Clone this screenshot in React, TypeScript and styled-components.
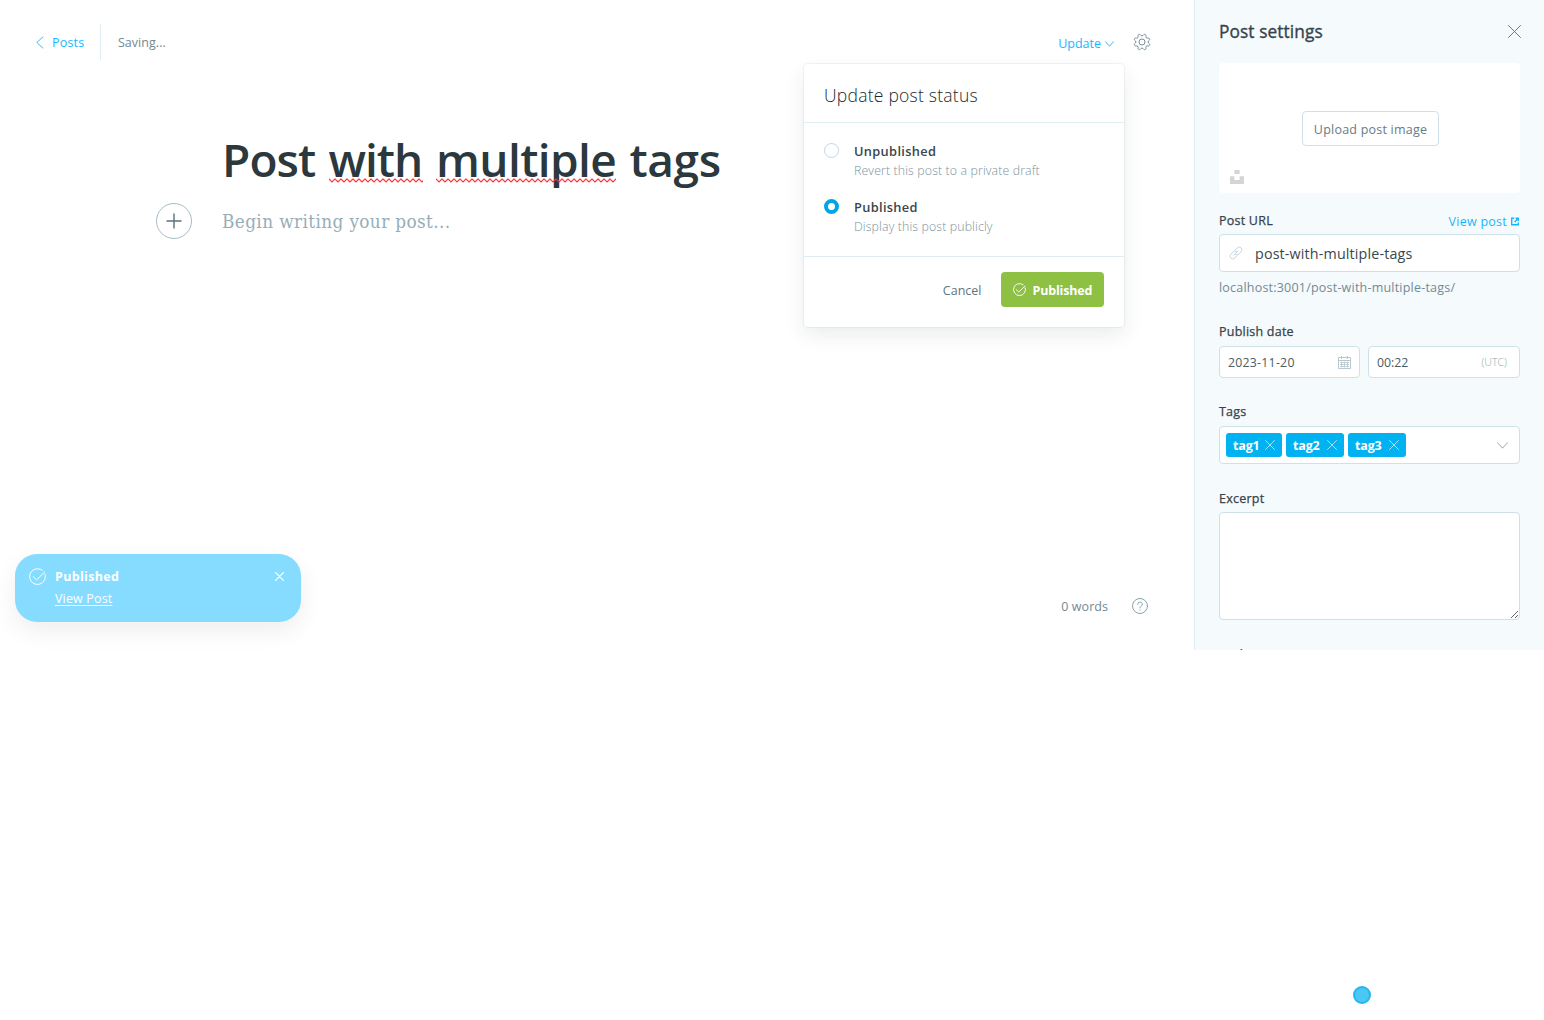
import React from "react";
import styled, { createGlobalStyle, css } from "styled-components";

const GlobalStyle = createGlobalStyle`
  *, *::before, *::after { box-sizing: border-box; }
  html, body { margin: 0; padding: 0; background: #fff; }
  body {
    font-family: "Open Sans", "Noto Sans", sans-serif;
    font-size: 12.5px;
    color: #394047;
  }
  button, input, textarea { font-family: inherit; margin: 0; }
`;

const ink = "#3a464c";
const slate = "#738a94";
const blue = "#14b8ff";
const line = "#dfeef3";
const field = "#cfe0e8";

const Page = styled.div`
  display: flex;
  flex-direction: column;
  width: 1544px;
  height: 1020px;
  overflow: hidden;
`;

const Screen = styled.div`
  position: relative;
  display: flex;
  height: 650px;
  overflow: hidden;
`;

const Label = styled.span<{ $ls?: number }>`
  letter-spacing: ${(p) => p.$ls ?? 0}px;
  white-space: nowrap;
`;

/* Editor */
const Editor = styled.main`
  position: relative;
  display: flex;
  flex-direction: column;
  width: 1194px;
`;

const TopBar = styled.header`
  display: flex;
  justify-content: space-between;
  height: 60px;
  padding: 24px 44px 0 36px;
`;

const BarGroup = styled.div`
  display: flex;
  align-items: center;
  height: 36px;
`;

const BackLink = styled.a`
  display: flex;
  align-items: center;
  gap: 8px;
  height: 36px;
  padding-right: 16px;
  border-right: 1px solid ${line};
  color: ${blue};
`;

const SaveState = styled.span`
  padding-left: 16.5px;
  color: ${slate};
`;

const UpdateTrigger = styled.button`
  display: flex;
  align-items: center;
  gap: 4px;
  padding: 3px 0 0;
  border: 0;
  background: none;
  color: ${blue};
  font-size: 12.5px;
  line-height: 18px;
`;

const IconButton = styled.button`
  display: flex;
  padding: 0;
  border: 0;
  background: none;
  color: ${slate};
`;

const GearButton = styled(IconButton)`
  margin-left: 20px;
`;

const CloseButton = styled(IconButton)`
  margin-right: -0.5px;
`;

const Writing = styled.div`
  flex: 1;
  padding: 66px 0 0 156px;
`;

const Title = styled.h1`
  display: flex;
  gap: 13.5px;
  margin: 0;
  padding-left: 66px;
  height: 66px;
  color: #2b383d;
  font-size: 46px;
  font-weight: 600;
  line-height: 66px;
`;

const Word = styled.span<{ $w: number; $ls: number }>`
  position: relative;
  width: ${(p) => p.$w}px;
  letter-spacing: ${(p) => p.$ls}px;
  white-space: nowrap;
`;

const Squiggle = styled.svg`
  position: absolute;
  left: 0;
  top: 52px;
  width: 100%;
  height: 5px;
`;

const BodyRow = styled.div`
  display: flex;
  align-items: center;
  gap: 30px;
  height: 36px;
  margin-top: 11px;
`;

const PlusButton = styled.button`
  display: flex;
  align-items: center;
  justify-content: center;
  width: 36px;
  height: 36px;
  padding: 0;
  border: 1px solid #a5bcc4;
  border-radius: 50%;
  background: #fff;
  color: #5a7079;
`;

const Placeholder = styled.p`
  margin: 0;
  padding-top: 2px;
  color: #97aeb8;
  font-family: "DejaVu Serif Condensed", "DejaVu Serif", serif;
  font-stretch: condensed;
  font-size: 18.8px;
  line-height: 30px;
`;

const Footer = styled.footer`
  display: flex;
  justify-content: flex-end;
  align-items: center;
  gap: 24px;
  height: 36px;
  margin-bottom: 26px;
  padding-right: 46px;
  color: ${slate};
`;

/* Status menu */
const StatusMenu = styled.section`
  position: absolute;
  left: 804px;
  top: 64px;
  display: flex;
  flex-direction: column;
  width: 320px;
  height: 263px;
  border-radius: 4px;
  background: #fff;
  box-shadow: 0 0 0 1px rgba(99, 114, 130, 0.08), 0 8px 20px rgba(27, 39, 51, 0.09);
`;

const MenuHeader = styled.h2`
  margin: 0;
  height: 59px;
  padding: 17px 20px 0;
  border-bottom: 1px solid ${line};
  color: #1c282d;
  font-size: 17.5px;
  font-weight: 300;
  line-height: 28px;
`;

const MenuBody = styled.div`
  display: flex;
  flex-direction: column;
  gap: 17px;
  height: 134px;
  padding: 19px 20px 0;
  border-bottom: 1px solid ${line};
`;

const Option = styled.label`
  display: flex;
  align-items: flex-start;
  gap: 15px;
`;

const Radio = styled.span<{ $on?: boolean }>`
  width: 15px;
  height: 15px;
  margin-top: 1px;
  border-radius: 50%;
  ${(p) =>
    p.$on
      ? css`border: 4px solid #00a5e6; background: #fff;`
      : css`border: 1px solid #b8d9e8; background: #fff;`}
`;

const OptionText = styled.span`
  display: flex;
  flex-direction: column;
`;

const OptionName = styled.span`
  margin-top: -1px;
  color: #3a464c;
  font-weight: 600;
  font-size: 12.8px;
  line-height: 20px;
  letter-spacing: 0.34px;
`;

const OptionHint = styled.span`
  color: #7b929c;
  font-size: 12.3px;
  font-weight: 300;
  line-height: 20px;
  letter-spacing: 0.14px;
`;

const MenuFooter = styled.div`
  display: flex;
  justify-content: flex-end;
  align-items: center;
  gap: 19.5px;
  padding: 15px 20px 0 0;
`;

const CancelButton = styled.button`
  padding: 2px 0 0;
  border: 0;
  background: none;
  color: #5f757e;
  font-size: 12.5px;
`;

const PublishButton = styled.button`
  display: flex;
  align-items: center;
  gap: 6.5px;
  width: 103px;
  height: 35px;
  padding: 0 0 0 12px;
  border: 0;
  border-radius: 4px;
  background: #8ec143;
  color: #fff;
  font-size: 12.5px;
  font-weight: 700;
  line-height: 18px;
`;

const ButtonText = styled(Label)`
  padding-top: 2px;
`;

/* Toast */
const Toast = styled.aside`
  position: absolute;
  left: 15px;
  top: 554px;
  display: flex;
  align-items: flex-start;
  width: 286px;
  height: 68px;
  padding: 12px 17px 0 14px;
  border-radius: 22px;
  background: #86dcff;
  color: #fff;
  box-shadow: 0 9px 24px rgba(0, 0, 0, 0.07);
`;

const ToastIcon = styled.span`
  display: flex;
  margin: 1px 9px 0 0;
  padding-top: 0.5px;
`;

const ToastText = styled.div`
  display: flex;
  flex: 1;
  flex-direction: column;
  gap: 2px;
  padding-top: 1px;
  line-height: 20px;
`;

const ToastTitle = styled.strong`
  font-weight: 700;
  font-size: 12.5px;
`;

const ToastLink = styled.a`
  text-decoration: underline;
  text-underline-offset: 2px;
`;

const ToastClose = styled.span`
  display: flex;
  padding-top: 6px;
`;

/* Settings */
const Settings = styled.aside`
  display: flex;
  flex-direction: column;
  width: 350px;
  padding: 0 24px;
  border-left: 1px solid ${line};
  background: #f5fafd;
  > * { flex-shrink: 0; }
`;

const SettingsHeader = styled.div`
  display: flex;
  justify-content: space-between;
  align-items: center;
  height: 63px;
`;

const SettingsTitle = styled.h2`
  margin: 0;
  color: #36434a;
  font-size: 17.3px;
  font-weight: 400;
  line-height: 24px;
  -webkit-text-stroke: 0.35px #36434a;
`;

const ImageDrop = styled.div`
  position: relative;
  display: flex;
  justify-content: center;
  align-items: center;
  height: 130px;
  border-radius: 4px;
  background: #fff;
`;

const UploadButton = styled.button`
  width: 137px;
  height: 35px;
  margin-left: 2px;
  padding: 2px 0 0;
  border: 1px solid ${field};
  border-radius: 4px;
  background: #fff;
  color: #667c86;
  font-size: 12.5px;
`;

const UnsplashMark = styled.svg`
  position: absolute;
  left: 11px;
  bottom: 9px;
`;

const FieldHead = styled.div<{ $top: number; $bottom: number }>`
  display: flex;
  justify-content: space-between;
  align-items: center;
  height: 20px;
  margin: ${(p) => p.$top}px 0 ${(p) => p.$bottom}px;
`;

const FieldName = styled.span`
  color: #36434a;
  font-size: 12.5px;
  line-height: 20px;
  letter-spacing: 0.23px;
  -webkit-text-stroke: 0.25px #36434a;
`;

const ViewLink = styled.a`
  display: flex;
  align-items: center;
  gap: 4px;
  padding: 1px 1px 0 0;
  color: ${blue};
`;

const Box = styled.div<{ $h: number; $w?: number }>`
  display: flex;
  align-items: center;
  width: ${(p) => (p.$w ? `${p.$w}px` : "100%")};
  height: ${(p) => p.$h}px;
  border: 1px solid ${field};
  border-radius: 4px;
  background: #fff;
  color: ${ink};
`;

const UrlBox = styled(Box)`
  gap: 12px;
  padding: 0 9px;
  font-size: 14.3px;
`;

const Hint = styled.p`
  margin: 6px 0 0;
  color: #738a94;
  line-height: 20px;
`;

const DateRow = styled.div`
  display: flex;
  gap: 8px;
`;

const DateBox = styled(Box)`
  justify-content: space-between;
  padding: 0 8px;
  color: #4a5b63;
  font-size: 12.3px;
`;

const Zone = styled.span`
  padding-right: 4px;
  color: #93a8b1;
  font-size: 10.6px;
  font-weight: 300;
`;

const TagBox = styled(Box)`
  gap: 4px;
  padding: 0 11px 0 6px;
`;

const Tag = styled.span<{ $w: number }>`
  display: flex;
  justify-content: space-between;
  align-items: center;
  width: ${(p) => p.$w}px;
  height: 24px;
  padding: 0 7.5px 0 7px;
  border-radius: 3px;
  background: #00b2f2;
  color: #fff;
  font-size: 12.5px;
  font-weight: 700;
`;

const Spacer = styled.span`
  flex: 1;
`;

const Excerpt = styled.textarea`
  display: block;
  width: 301px;
  height: 108px;
  border: 1px solid ${field};
  border-radius: 4px;
  background: #fff;
  resize: vertical;
`;

const Below = styled.div`
  display: flex;
  justify-content: flex-end;
  padding: 336px 173px 0 0;
`;

const Pointer = styled.span`
  width: 18px;
  height: 18px;
  border: 2px solid #22b7ee;
  border-radius: 50%;
  background: #4cc6f3;
`;

const Cross = ({ size, width = 1, color = "currentColor" }: { size: number; width?: number; color?: string }) => (
  <svg width={size} height={size} viewBox={`0 0 ${size} ${size}`} fill="none" stroke={color} strokeWidth={width}>
    <path d={`M.5.5 ${size - 0.5} ${size - 0.5}M${size - 0.5}.5.5 ${size - 0.5}`} strokeLinecap="round" />
  </svg>
);

const Chevron = ({ w, h, color }: { w: number; h: number; color: string }) => (
  <svg width={w} height={h} viewBox={`0 0 ${w} ${h}`} fill="none" stroke={color}>
    <path d={`M.5.7 ${w / 2} ${h - 0.8} ${w - 0.5}.7`} strokeLinecap="round" strokeLinejoin="round" />
  </svg>
);

const CheckCircle = ({ size, width }: { size: number; width: number }) => (
  <svg width={size} height={size} viewBox="0 0 24 24" fill="none" stroke="#fff" strokeWidth={width} strokeLinecap="round" strokeLinejoin="round">
    <path d="M22.6 8.6A11.1 11.1 0 1 1 18.6 3.1" />
    <path d="M6 12.2 10.7 16.8 22 5.6" />
  </svg>
);

const Gear = () => (
  <svg width="16" height="16" viewBox="0.3 0.3 23.4 23.4" overflow="visible" fill="none" stroke="currentColor" strokeWidth="1.4" strokeLinejoin="round">
    <path d="M10.546 2.438a1.957 1.957 0 0 0 2.908 0L14.4 1.4a1.959 1.959 0 0 1 3.41 1.413l-.071 1.4A1.958 1.958 0 0 0 19.79 6.271l1.4-.071A1.959 1.959 0 0 1 22.6 9.61l-1.042.94a1.96 1.96 0 0 0 0 2.909l1.042.94a1.959 1.959 0 0 1-1.413 3.41l-1.4-.071a1.958 1.958 0 0 0-2.056 2.056l.071 1.4A1.959 1.959 0 0 1 14.4 22.6l-.941-1.041a1.959 1.959 0 0 0-2.908 0L9.606 22.6A1.959 1.959 0 0 1 6.2 21.192l.072-1.4a1.958 1.958 0 0 0-2.056-2.056l-1.4.071A1.958 1.958 0 0 1 1.4 14.4l1.041-.94a1.96 1.96 0 0 0 0-2.909L1.4 9.61A1.958 1.958 0 0 1 2.809 6.2l1.4.071A1.958 1.958 0 0 0 6.267 4.211L6.2 2.81A1.959 1.959 0 0 1 9.606 1.4Z" />
    <circle cx="12" cy="12" r="4.4" />
  </svg>
);

const Help = () => (
  <svg width="16" height="16" viewBox="0 0 16 16" fill="none" stroke="#8ba2ac" strokeLinecap="round">
    <circle cx="8" cy="8" r="7.5" />
    <path d="M5.7 6.3a2.3 2.3 0 1 1 3.4 2C8.3 8.7 8 9 8 10" />
    <circle cx="8" cy="12.1" r=".6" fill="#8ba2ac" stroke="none" />
  </svg>
);

const LinkIcon = () => (
  <svg width="14" height="14" viewBox="0 0 24 24" fill="none" stroke="#c5d8e0" strokeWidth="1.7" strokeLinecap="round">
    <path d="M8.500 15.500 15.500 8.500" />
    <path d="M10.200 7.600 14.100 3.200a4.700 4.700 0 0 1 6.700 6.700l-3.900 3.900a4.700 4.700 0 0 1-5.700.7" />
    <path d="M13.800 16.400 9.900 20.800a4.700 4.700 0 0 1-6.700-6.700l3.900-3.900a4.700 4.700 0 0 1 5.700-.7" />
  </svg>
);

const External = () => (
  <svg width="8" height="9" viewBox="0 0 8 9" fill="none" stroke={blue} strokeWidth="1.4">
    <path d="M3.200 1.200H.7v6.600h6.600V5.500M4.600 1.200h2.700v2.700M7.200 1.300 3.600 4.900" />
  </svg>
);

const Calendar = () => (
  <svg width="13" height="13" viewBox="0 0 13 13" fill="none" stroke="#b9c8ce">
    <path d="M.5 1.500h12v11H.5zM.5 4.500h12M3.500 0v3M9.500 0v3" />
    <path d="M2 6.500h9M2 8.500h9M2 10.500h9M3.500 5.500v6M6.500 5.500v6M9.500 5.500v6" strokeWidth=".8" />
  </svg>
);

const Misspelled = ({ children, id, w, ls }: { children: string; id: string; w: number; ls: number }) => (
  <Word $w={w} $ls={ls}>
    {children}
    <Squiggle aria-hidden="true">
      <defs>
        <pattern id={id} width="6" height="5" patternUnits="userSpaceOnUse">
          <path d="M-1 0 0 1 3 4 6 1 7 0" fill="none" stroke="#ff3236" strokeWidth="1.1" />
        </pattern>
      </defs>
      <rect width="100%" height="5" fill={`url(#${id})`} />
    </Squiggle>
  </Word>
);

const tags = [
  { name: "tag1", width: 56 },
  { name: "tag2", width: 58 },
  { name: "tag3", width: 58 },
];

export default function App() {
  return (
    <Page>
      <GlobalStyle />
      <Screen>
        <Editor>
          <TopBar>
            <BarGroup>
              <BackLink>
                <svg width="8" height="13" viewBox="0 0 8 13" fill="none" stroke={blue}>
                  <path d="M7.200.700.800 6.500l6.400 5.800" strokeWidth=".9" />
                </svg>
                <Label $ls={0.2}>Posts</Label>
              </BackLink>
              <SaveState><Label $ls={0.05}>Saving...</Label></SaveState>
            </BarGroup>
            <BarGroup>
              <UpdateTrigger>
                <Label>Update</Label>
                <Chevron w={9} h={6} color="#4cb4dd" />
              </UpdateTrigger>
              <GearButton aria-label="Settings"><Gear /></GearButton>
            </BarGroup>
          </TopBar>
          <Writing>
            <Title>
              <Word $w={93} $ls={-0.9}>Post</Word>
              <Misspelled id="wave-a" w={94} ls={-1}>with</Misspelled>
              <Misspelled id="wave-b" w={180} ls={-0.6}>multiple</Misspelled>
              <Word $w={93} $ls={-0.4}>tags</Word>
            </Title>
            <BodyRow>
              <PlusButton aria-label="Add card">
                <svg width="16" height="16" viewBox="0 0 16 16" stroke="currentColor" strokeWidth="1.4">
                  <path d="M8 .5v15M.5 8h15" />
                </svg>
              </PlusButton>
              <Placeholder><Label $ls={0.38}>Begin writing your post...</Label></Placeholder>
            </BodyRow>
          </Writing>
          <Footer>
            <Label $ls={0.05}>0 words</Label>
            <Help />
          </Footer>
          <StatusMenu>
            <MenuHeader><Label $ls={0.24}>Update post status</Label></MenuHeader>
            <MenuBody>
              <Option>
                <Radio />
                <OptionText>
                  <OptionName>Unpublished</OptionName>
                  <OptionHint>Revert this post to a private draft</OptionHint>
                </OptionText>
              </Option>
              <Option>
                <Radio $on />
                <OptionText>
                  <OptionName>Published</OptionName>
                  <OptionHint>Display this post publicly</OptionHint>
                </OptionText>
              </Option>
            </MenuBody>
            <MenuFooter>
              <CancelButton><Label>Cancel</Label></CancelButton>
              <PublishButton>
                <CheckCircle size={13} width={1.7} />
                <ButtonText $ls={-0.18}>Published</ButtonText>
              </PublishButton>
            </MenuFooter>
          </StatusMenu>
        </Editor>
        <Settings>
          <SettingsHeader>
            <SettingsTitle><Label $ls={0.1}>Post settings</Label></SettingsTitle>
            <CloseButton aria-label="Close"><Cross size={13} width={0.9} color="#5d6a70" /></CloseButton>
          </SettingsHeader>
          <ImageDrop>
            <UploadButton><Label $ls={0.22}>Upload post image</Label></UploadButton>
            <UnsplashMark width="14" height="14" viewBox="0 0 32 32" fill="#d5d5d5">
              <path d="M10 9V0h12v9H10zm12 5h10v18H0V14h10v9h12v-9z" />
            </UnsplashMark>
          </ImageDrop>
          <FieldHead $top={18} $bottom={3}>
            <FieldName>Post URL</FieldName>
            <ViewLink><Label $ls={0.25}>View post</Label><External /></ViewLink>
          </FieldHead>
          <UrlBox $h={38}>
            <LinkIcon />
            <Label $ls={0.15}>post-with-multiple-tags</Label>
          </UrlBox>
          <Hint><Label $ls={0.21}>localhost:3001/post-with-multiple-tags/</Label></Hint>
          <FieldHead $top={24} $bottom={4}><FieldName>Publish date</FieldName></FieldHead>
          <DateRow>
            <DateBox $h={32} $w={141}><Label $ls={0.25}>2023-11-20</Label><Calendar /></DateBox>
            <DateBox $h={32} $w={152}><Label>00:22</Label><Zone><Label>(UTC)</Label></Zone></DateBox>
          </DateRow>
          <FieldHead $top={24} $bottom={4}><FieldName>Tags</FieldName></FieldHead>
          <TagBox $h={38}>
            {tags.map((tag) => (
              <Tag key={tag.name} $w={tag.width}>
                <Label $ls={-0.15}>{tag.name}</Label>
                <Cross size={10} width={0.9} color="#b9e9fb" />
              </Tag>
            ))}
            <Spacer />
            <Chevron w={11} h={7} color="#93abb5" />
          </TagBox>
          <FieldHead $top={25} $bottom={3}><FieldName>Excerpt</FieldName></FieldHead>
          <Excerpt aria-label="Excerpt" />
          <FieldHead $top={25} $bottom={5}><FieldName>Authors</FieldName></FieldHead>
        </Settings>
        <Toast>
          <ToastIcon><CheckCircle size={17} width={1.4} /></ToastIcon>
          <ToastText>
            <ToastTitle><Label $ls={0.33}>Published</Label></ToastTitle>
            <ToastLink><Label $ls={0.15}>View Post</Label></ToastLink>
          </ToastText>
          <ToastClose><Cross size={9} width={1.1} color="#f7fcff" /></ToastClose>
        </Toast>
      </Screen>
      <Below><Pointer /></Below>
    </Page>
  );
}
